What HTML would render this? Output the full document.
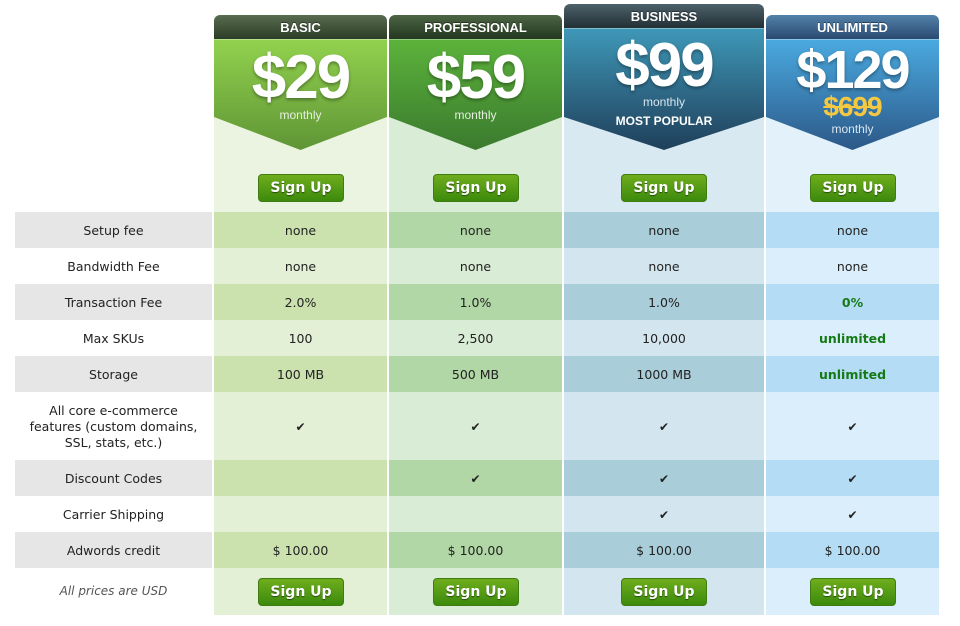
<!DOCTYPE html><html><head><style>
body{margin:0;width:960px;height:626px;background:#fff;position:relative;font-family:"DejaVu Sans","Liberation Sans",sans-serif;overflow:hidden}
.a{position:absolute}
.hd{position:absolute;height:24px;border-radius:6px 6px 0 0;color:#fff;font:bold 13px "Liberation Sans",sans-serif;text-align:center;line-height:26px;text-shadow:0 -1px 0 rgba(0,0,0,.4)}
.pr{position:absolute;text-align:center;color:#fff}
.big{font:bold 62px/1 "Liberation Sans",sans-serif;letter-spacing:-2px;text-shadow:0 2px 3px rgba(0,0,0,.35)}
.mo{font:12px "Liberation Sans",sans-serif;color:#e4efe0}
.btn{position:absolute;width:84px;height:26px;border:1px solid #3f7d12;border-radius:4px;background:linear-gradient(#6fad1d,#3c8a0c);color:#fff;font:bold 14px/27px "DejaVu Sans",sans-serif;text-align:center;text-shadow:0 1px 1px rgba(0,0,0,.5)}
.row{position:absolute;left:15px;width:197px;text-align:center;font-size:12.5px;color:#222}
.cell{position:absolute;text-align:center;font-size:12.5px;color:#222;box-sizing:border-box;padding-top:2px}
.g{color:#157a15;font-weight:bold}
.ck{font-size:12px;font-weight:bold}
</style></head><body>
<div id="w"></div>
<script>
var cols=[
 {x:214,w:173,top:15,hd:['#586c50','#2c3d27'],pr:['#92d24e','#5f9535'],bg:'#ebf4e0',lt:'#e3f0d6',dk:'#cbe2ae',name:'BASIC'},
 {x:389,w:173,top:15,hd:['#4d6444','#233820'],pr:['#5cb33b','#3b7a2e'],bg:'#d9ecd5',lt:'#d9ecd5',dk:'#b2d7a6',name:'PROFESSIONAL'},
 {x:564,w:200,top:4,hd:['#4d616a','#222f35'],pr:['#3f98b8','#1f3f5a'],bg:'#d9e9f1',lt:'#d3e5ee',dk:'#a9cdd9',name:'BUSINESS'},
 {x:766,w:173,top:15,hd:['#5281a9','#2a4a71'],pr:['#4aaae0','#2c5888'],bg:'#e3f1fb',lt:'#dbeefb',dk:'#b5dcf5',name:'UNLIMITED'}];
var rows=[[212,36],[248,36],[284,36],[320,36],[356,36],[392,68],[460,36],[496,36],[532,36]];
var labels=['Setup fee','Bandwidth Fee','Transaction Fee','Max SKUs','Storage','All core e-commerce<br>features (custom domains,<br>SSL, stats, etc.)','Discount Codes','Carrier Shipping','Adwords credit'];
var C='<span class=ck>✔</span>';
var data=[['none','none','none','none'],['none','none','none','none'],['2.0%','1.0%','1.0%','<span class=g>0%</span>'],['100','2,500','10,000','<span class=g>unlimited</span>'],['100 MB','500 MB','1000 MB','<span class=g>unlimited</span>'],[C,C,C,C],['',C,C,C],['','',C,C],['$ 100.00','$ 100.00','$ 100.00','$ 100.00']];
var h='';
rows.forEach(function(r,i){h+='<div class="row" style="top:'+r[0]+'px;height:'+r[1]+'px;background:'+(i%2==0?'#e6e6e6':'#fff')+';display:flex;align-items:center;justify-content:center;line-height:16px;box-sizing:border-box;padding-top:1px">'+labels[i]+'</div>';});
h+='<div class="row" style="top:568px;height:47px;line-height:47px;font-style:italic;font-size:12px;color:#555">All prices are USD</div>';
cols.forEach(function(c,j){
 var pt=c.top+24;
 h+='<div class="a" style="left:'+c.x+'px;top:'+pt+'px;width:'+c.w+'px;height:'+(615-pt)+'px;background:'+c.bg+'"></div>';
 rows.forEach(function(r,i){h+='<div class="cell" style="left:'+c.x+'px;width:'+c.w+'px;top:'+r[0]+'px;height:'+r[1]+'px;line-height:'+(r[1]-2)+'px;background:'+(i%2==0?c.dk:c.lt)+'">'+data[i][j]+'</div>';});
 h+='<div class="a" style="left:'+c.x+'px;top:568px;width:'+c.w+'px;height:47px;background:'+c.lt+'"></div>';
 h+='<div class="hd" style="left:'+c.x+'px;width:'+c.w+'px;top:'+c.top+'px;background:linear-gradient('+c.hd[0]+','+c.hd[1]+')">'+c.name+'</div>';
 var W=c.w,H=150-pt;
 h+='<svg class="a" style="left:'+c.x+'px;top:'+pt+'px" width="'+W+'" height="'+H+'"><defs><linearGradient id="g'+j+'" x1="0" y1="0" x2="0" y2="1"><stop offset="0" stop-color="'+c.pr[0]+'"/><stop offset="1" stop-color="'+c.pr[1]+'"/></linearGradient></defs><polygon points="0,0 '+W+',0 '+W+','+(117-pt)+' '+(W/2)+','+H+' 0,'+(117-pt)+'" fill="url(#g'+j+')"/><rect width="'+W+'" height="1" fill="rgba(255,255,255,.35)"/></svg>';
 var bx=c.x+Math.round(c.w/2)-43;
 h+='<div class="btn" style="left:'+bx+'px;top:174px">Sign Up</div><div class="btn" style="left:'+bx+'px;top:578px">Sign Up</div>';
});
h+='<div class="pr" style="left:214px;width:173px;top:47px"><div class="big">$29</div><div class="mo" style="margin-top:-1px">monthly</div></div>';
h+='<div class="pr" style="left:389px;width:173px;top:47px"><div class="big">$59</div><div class="mo" style="margin-top:-1px">monthly</div></div>';
h+='<div class="pr" style="left:564px;width:200px;top:35px"><div class="big">$99</div><div class="mo" style="margin-top:-2px;color:#d8e6ee">monthly</div><div style="font:bold 12px Liberation Sans,sans-serif;margin-top:5px">MOST POPULAR</div></div>';
h+='<div class="pr" style="left:766px;width:173px;top:43px"><div class="big" style="font-size:54px">$129</div><div style="font:bold 28px/1 Liberation Sans,sans-serif;color:#f5c842;text-decoration:line-through;letter-spacing:-1px;margin-top:-4px">$699</div><div class="mo" style="color:#d8e6ee;margin-top:1px">monthly</div></div>';
document.getElementById('w').innerHTML=h;
</script>
</body></html>
